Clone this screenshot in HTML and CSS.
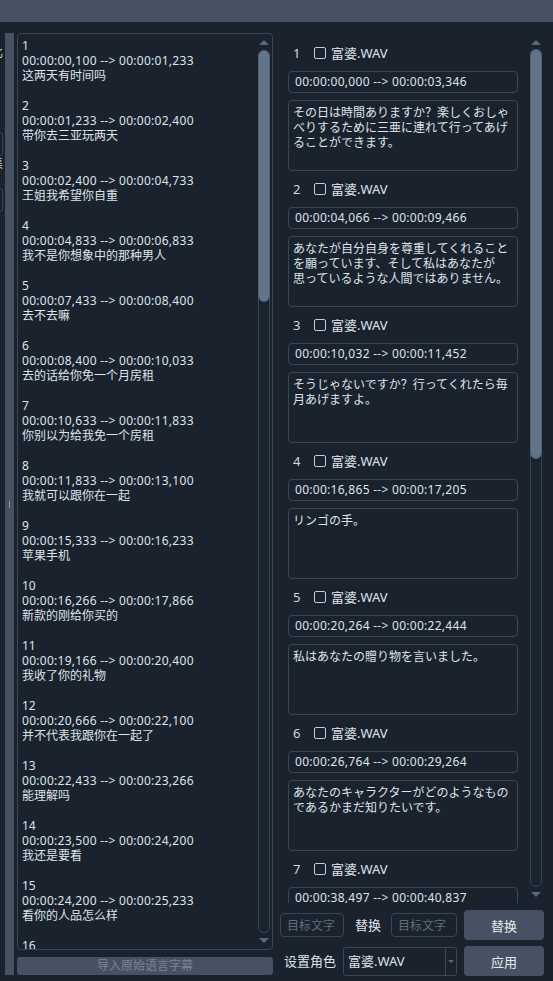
FILE: index.html
```html
<!DOCTYPE html>
<html>
  <head>
    <meta charset="utf-8">
    <link rel="stylesheet" href="styles.css">
  </head>
  <body>
    <div class="top-bar"></div>
    <div class="main">
      <div class="stub">
        <div class="stub-inner">
          <div class="stub-label first">比</div>
          <div class="stub-box first"></div>
          <div class="stub-label">集</div>
          <div class="stub-box"></div>
        </div>
      </div>
      <div class="splitter"><span class="grip"></span></div>

      <div class="source">
        <div class="panel list-panel">
          <div class="list">
            <div class="sub"><div>1</div><div class="cue">00:00:00,100 --&gt; 00:00:01,233</div><div>这两天有时间吗</div></div>
            <div class="sub"><div>2</div><div class="cue">00:00:01,233 --&gt; 00:00:02,400</div><div>带你去三亚玩两天</div></div>
            <div class="sub"><div>3</div><div class="cue">00:00:02,400 --&gt; 00:00:04,733</div><div>王姐我希望你自重</div></div>
            <div class="sub"><div>4</div><div class="cue">00:00:04,833 --&gt; 00:00:06,833</div><div>我不是你想象中的那种男人</div></div>
            <div class="sub"><div>5</div><div class="cue">00:00:07,433 --&gt; 00:00:08,400</div><div>去不去嘛</div></div>
            <div class="sub"><div>6</div><div class="cue">00:00:08,400 --&gt; 00:00:10,033</div><div>去的话给你免一个月房租</div></div>
            <div class="sub"><div>7</div><div class="cue">00:00:10,633 --&gt; 00:00:11,833</div><div>你别以为给我免一个房租</div></div>
            <div class="sub"><div>8</div><div class="cue">00:00:11,833 --&gt; 00:00:13,100</div><div>我就可以跟你在一起</div></div>
            <div class="sub"><div>9</div><div class="cue">00:00:15,333 --&gt; 00:00:16,233</div><div>苹果手机</div></div>
            <div class="sub"><div>10</div><div class="cue">00:00:16,266 --&gt; 00:00:17,866</div><div>新款的刚给你买的</div></div>
            <div class="sub"><div>11</div><div class="cue">00:00:19,166 --&gt; 00:00:20,400</div><div>我收了你的礼物</div></div>
            <div class="sub"><div>12</div><div class="cue">00:00:20,666 --&gt; 00:00:22,100</div><div>并不代表我跟你在一起了</div></div>
            <div class="sub"><div>13</div><div class="cue">00:00:22,433 --&gt; 00:00:23,266</div><div>能理解吗</div></div>
            <div class="sub"><div>14</div><div class="cue">00:00:23,500 --&gt; 00:00:24,200</div><div>我还是要看</div></div>
            <div class="sub"><div>15</div><div class="cue">00:00:24,200 --&gt; 00:00:25,233</div><div>看你的人品怎么样</div></div>
            <div class="sub"><div>16</div></div>
          </div>
          <div class="vscroll left-scroll">
            <span class="arrow up"></span>
            <div class="track"><div class="thumb left-thumb"></div></div>
            <span class="arrow down"></span>
          </div>
        </div>
        <button class="import-btn" disabled>导入原始语言字幕</button>
      </div>

      <div class="target">
        <div class="editor">
          <div class="items">
            <div class="item">
              <div class="item-head"><span class="num">1</span><span class="check"></span>富婆.WAV</div>
              <div class="time">00:00:00,000 --&gt; 00:00:03,346</div>
              <div class="text">その日は時間ありますか？楽しくおしゃ
べりするために三亜に連れて行ってあげ
ることができます。</div>
            </div>
            <div class="item">
              <div class="item-head"><span class="num">2</span><span class="check"></span>富婆.WAV</div>
              <div class="time">00:00:04,066 --&gt; 00:00:09,466</div>
              <div class="text">あなたが自分自身を尊重してくれること
を願っています、そして私はあなたが
思っているような人間ではありません。</div>
            </div>
            <div class="item">
              <div class="item-head"><span class="num">3</span><span class="check"></span>富婆.WAV</div>
              <div class="time">00:00:10,032 --&gt; 00:00:11,452</div>
              <div class="text">そうじゃないですか？行ってくれたら毎
月あげますよ。</div>
            </div>
            <div class="item">
              <div class="item-head"><span class="num">4</span><span class="check"></span>富婆.WAV</div>
              <div class="time">00:00:16,865 --&gt; 00:00:17,205</div>
              <div class="text">リンゴの手。</div>
            </div>
            <div class="item">
              <div class="item-head"><span class="num">5</span><span class="check"></span>富婆.WAV</div>
              <div class="time">00:00:20,264 --&gt; 00:00:22,444</div>
              <div class="text">私はあなたの贈り物を言いました。</div>
            </div>
            <div class="item">
              <div class="item-head"><span class="num">6</span><span class="check"></span>富婆.WAV</div>
              <div class="time">00:00:26,764 --&gt; 00:00:29,264</div>
              <div class="text">あなたのキャラクターがどのようなもの
であるかまだ知りたいです。</div>
            </div>
            <div class="item">
              <div class="item-head"><span class="num">7</span><span class="check"></span>富婆.WAV</div>
              <div class="time">00:00:38,497 --&gt; 00:00:40,837</div>
              <div class="text"></div>
            </div>
          </div>
          <div class="vscroll right-scroll">
            <span class="arrow up"></span>
            <div class="track"><div class="thumb right-thumb"></div></div>
            <span class="arrow down"></span>
          </div>
        </div>

        <div class="row replace-row">
          <input class="field" placeholder="目标文字">
          <span class="label replace-label">替换</span>
          <input class="field wide" placeholder="目标文字">
          <button class="btn">替换</button>
        </div>
        <div class="row role-row">
          <span class="label role-label">设置角色</span>
          <div class="combo">
            <span class="combo-value">富婆.WAV</span>
            <span class="combo-drop"><span class="caret"></span></span>
          </div>
          <button class="btn">应用</button>
        </div>
      </div>
    </div>
  </body>
</html>
```

FILE: styles.css
```css
body {
  margin: 0;
  height: 981px;
  overflow: hidden;
  background: #19222d;
  color: #dfe4ea;
  font-family: "Noto Sans", "Noto Sans CJK SC", sans-serif;
  font-size: 12px;
  line-height: 15px;
}
.top-bar {
  height: 22px;
  background: #465263;
}
.main {
  display: flex;
  height: 959px;
}

/* cut-off panel at the far left */
.stub {
  width: 5px;
  overflow: hidden;
}
.stub-inner {
  width: 30px;
  margin-left: -27px;
}
.stub-label {
  text-align: right;
  color: #c9d0d8;
}
.stub-label.first {
  margin-top: 23px;
}
.stub-box {
  height: 22px;
  border: 1px solid #3a4656;
  border-radius: 3px;
  margin-top: 17px;
}
.stub-box.first {
  margin-top: 72px;
}

.splitter {
  width: 9px;
  margin: 11px 3px 6px 0;
  background: #465263;
  display: flex;
  align-items: center;
  justify-content: center;
}
.grip {
  width: 1px;
  height: 7px;
  background: #8593a2;
}

/* source subtitles */
.source {
  width: 256px;
  display: flex;
  flex-direction: column;
  padding: 11px 0 6px;
}
.panel {
  box-sizing: border-box;
  border: 1px solid #3a4656;
  border-radius: 4px;
}
.list-panel {
  height: 917px;
  display: flex;
}
.list {
  flex: 1;
  overflow: hidden;
  padding: 4px 0 0 4px;
}
.sub {
  margin-bottom: 15px;
}
.cue,
.time {
  letter-spacing: 0.28px;
}
.import-btn {
  margin-top: 7px;
  height: 18px;
  padding: 0;
  border: 0;
  border-radius: 3px;
  background: #465263;
  color: #7b8695;
  font-family: inherit;
  font-size: 12px;
  line-height: 18px;
}

/* scrollbars */
.vscroll {
  width: 12px;
  display: flex;
  flex-direction: column;
  align-items: center;
  box-sizing: border-box;
}
.left-scroll {
  margin-right: 2px;
  padding: 6px 0;
}
.right-scroll {
  margin-left: 12px;
  padding: 7px 0 6px;
}
.arrow {
  width: 0;
  height: 0;
  border-left: 5px solid transparent;
  border-right: 5px solid transparent;
}
.arrow.up {
  border-bottom: 5px solid #5a6878;
  margin-bottom: 5px;
}
.right-scroll .arrow.up {
  margin-bottom: 4px;
}
.arrow.down {
  border-top: 5px solid #5a6878;
  margin-top: 5px;
}
.track {
  flex: 1;
  width: 12px;
  box-sizing: border-box;
  border: 1px solid #374453;
  border-radius: 6px;
}
.thumb {
  margin: -1px;
  border: 1px solid #4e6074;
  border-radius: 6px;
  background: #617488;
}
.left-thumb {
  height: 250px;
}
.right-thumb {
  height: 408px;
}

/* translated items */
.target {
  flex: 1;
  padding: 11px 9px 5px 7px;
}
.editor {
  height: 870px;
  display: flex;
}
.items {
  width: 230px;
  margin-left: 8px;
  padding-top: 10px;
  overflow: hidden;
}
.item {
  margin-bottom: 8px;
}
.item-head {
  height: 20px;
  display: flex;
  align-items: center;
  font-size: 13px;
}
.num {
  width: 21px;
  padding-left: 5px;
  color: #d3d9e0;
}
.check {
  width: 12px;
  height: 12px;
  box-sizing: border-box;
  border: 1px solid #c3cad2;
  border-radius: 2px;
  margin-right: 5px;
}
.time {
  margin-top: 8px;
  height: 22px;
  box-sizing: border-box;
  border: 1px solid #3a4656;
  border-radius: 4px;
  padding: 0 6px;
  line-height: 20px;
}
.text {
  margin-top: 7px;
  height: 71px;
  box-sizing: border-box;
  border: 1px solid #3a4656;
  border-radius: 4px;
  padding: 4px;
  white-space: pre-line;
}

/* bottom controls */
.row {
  display: flex;
  align-items: center;
  height: 30px;
}
.replace-row {
  margin-top: 7px;
}
.role-row {
  margin-top: 6px;
}
.field {
  width: 64px;
  height: 24px;
  box-sizing: border-box;
  border: 1px solid #3a4656;
  border-radius: 4px;
  background: transparent;
  padding: 0 0 0 6px;
  font-family: inherit;
  font-size: 12px;
  color: #dfe4ea;
  outline: none;
}
.field.wide {
  width: 66px;
}
.field::placeholder {
  color: #626e7c;
}
.label {
  font-size: 13px;
  color: #dfe4ea;
}
.replace-label {
  width: 26px;
  margin: 0 10px 0 11px;
}
.role-label {
  width: 52px;
  margin: 0 7px 0 4px;
}
.combo {
  width: 114px;
  height: 29px;
  box-sizing: border-box;
  border: 1px solid #3a4656;
  border-radius: 3px;
  display: flex;
  margin-right: 7px;
}
.combo-value {
  flex: 1;
  padding-left: 4px;
  font-size: 13px;
  line-height: 27px;
}
.combo-drop {
  width: 10px;
  border-left: 1px solid #3a4656;
  display: flex;
  align-items: center;
  justify-content: center;
}
.caret {
  width: 0;
  height: 0;
  border-left: 3px solid transparent;
  border-right: 3px solid transparent;
  border-top: 3px solid #5a6676;
}
.btn {
  width: 80px;
  height: 30px;
  margin-left: 7px;
  border: 0;
  border-radius: 4px;
  background: #465263;
  color: #e6eaef;
  font-family: inherit;
  font-size: 13px;
}
.role-row .btn {
  margin-left: 0;
}
```
